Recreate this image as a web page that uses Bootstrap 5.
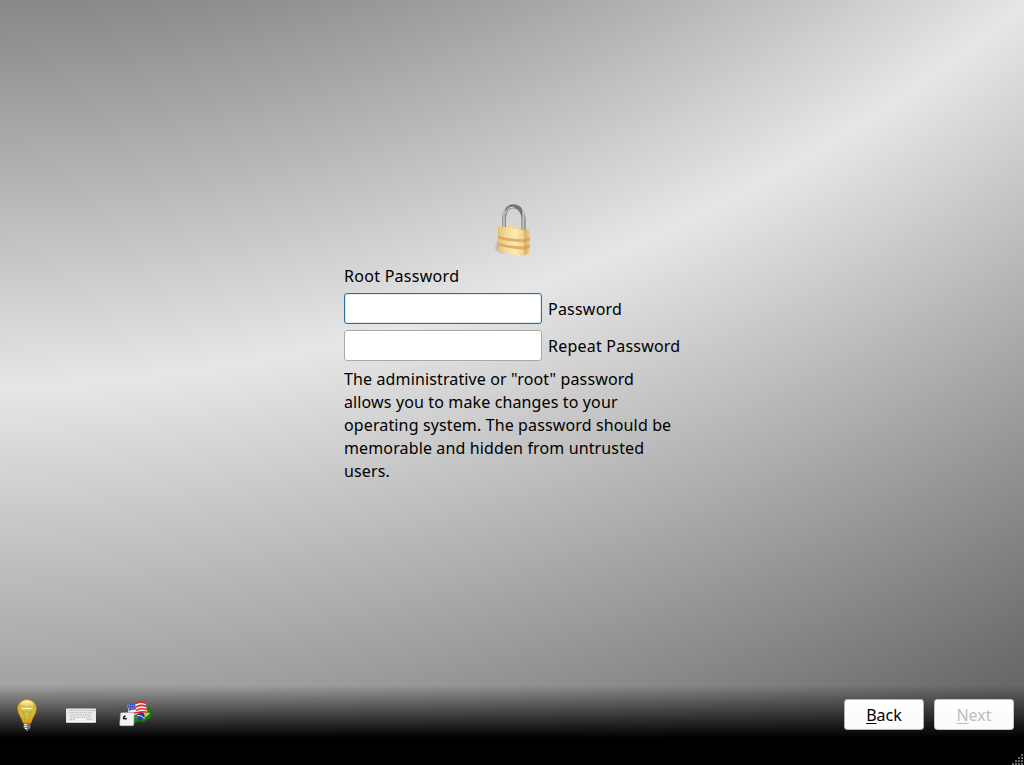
<!DOCTYPE html>
<html lang="en">
<head>
<meta charset="utf-8">
<meta name="viewport" content="width=device-width, initial-scale=1">
<title>Root Password</title>
<link href="https://cdn.jsdelivr.net/npm/bootstrap@5.3.0/dist/css/bootstrap.min.css" rel="stylesheet">
<style>
  body {
    font-family: "Noto Sans", sans-serif; font-size: 16px; line-height: 23px; color: #000;
    background: radial-gradient(circle at -51px -1308px, #868686 1305px, #e6e6e6 1697px, #666 2264px) no-repeat #646464;
  }
  .setup-form { width: 336px; padding-top: 200px; }
  .form-title { margin-top: 5px; letter-spacing: .28px; }
  .field-list { padding-top: 5px; letter-spacing: .22px; }
  .setup-form .form-control { width: 198px; height: 31px; border: 1px solid #a8a8a8; border-radius: 3px; padding: 2px 6px; background: #fff; box-shadow: none; }
  .setup-form .form-control.active-field { border-color: #2270a4; box-shadow: inset 0 0 0 1px #e0edf4; }
  .field-row { gap: 6px; height: 31px; margin-bottom: 6px; }
  .field-row label { padding-top: 2px; }
  .hint-text { padding-top: 1px; letter-spacing: .13px; }
  .bottom-bar { height: 80px; padding: 14px 10px 0 11px; background: linear-gradient(rgba(0,0,0,0), #000 53px); }
  .tool-icons { gap: 22px; height: 32px; }
  .nav-btn { width: 80px; height: 31px; padding: 2px 0 0; line-height: 23px; color: #000; background: linear-gradient(#fff, #fafafa); border: 1px solid #b4b4b4; border-radius: 3px; }
  .nav-btn:disabled { color: #bebebe; background: linear-gradient(#fff, #fafafa); border-color: #c4c4c4; opacity: 1; }
  .nav-btn u { text-decoration-thickness: 1px; text-underline-offset: 2px; text-decoration-skip-ink: none; }
  svg { display: block; }
</style>
</head>
<body>
<div class="vh-100 d-flex flex-column overflow-hidden position-relative">
  <main class="flex-grow-1">
    <div class="setup-form mx-auto">
      <svg class="mx-auto" width="60" height="60" viewBox="0 0 60 60">
        <defs>
          <linearGradient id="brass"><stop offset="0" stop-color="#e3c07a"/><stop offset=".2" stop-color="#f0d692"/><stop offset=".55" stop-color="#fcecb4"/><stop offset=".8" stop-color="#f0d28a"/><stop offset=".85" stop-color="#d8ae62"/><stop offset="1" stop-color="#eed08a"/></linearGradient>
          <linearGradient id="steel" gradientUnits="userSpaceOnUse" x1="20" x2="43.500" y1="0" y2="0"><stop offset="0" stop-color="#808080"/><stop offset=".08" stop-color="#ccc"/><stop offset=".17" stop-color="#7b7b7b"/><stop offset=".5" stop-color="#858585"/><stop offset=".83" stop-color="#747474"/><stop offset=".91" stop-color="#cecece"/><stop offset="1" stop-color="#666"/></linearGradient>
          <filter id="haze" x="-50%" width="200%"><feGaussianBlur stdDeviation="1.3"/></filter>
        </defs>
        <path d="M17 38l-3.500 10q2 5 9 5z" fill="#777" opacity=".45" filter="url(#haze)"/>
        <path d="M16 26.500l6-1.500 25 4.500-5.500 2.500z" fill="#f3d78c"/>
        <path d="M22 27.500V18.500C22.300 10 26.500 6.300 31.500 6.300S41.500 11 41.500 19.500V31" fill="none" stroke="url(#steel)" stroke-width="4"/>
        <path d="M23 13.500C25 9 28 7 32 7" fill="none" stroke="#ddd" stroke-width="1"/>
        <path d="M28 5.500q5-1.200 9 3" fill="none" stroke="#555" stroke-width=".9"/>
        <path d="M15.900 27.500q0-1.500 1.300-1.200l24.500 4.200 5-1.500q1.100-.3 1.100.8V51.500q0 1.200-1 1.600l-4.300 2.500q-1 .5-2 .3Q27 54.500 17 51q-1.100-.5-1.100-1.700z" fill="url(#brass)"/>
        <path d="M16 35.700Q28 39.400 42 39.200l5.700-1.700v3L42 42.300Q28 42 16 38.500zM16 42.500Q28 46.500 42 46.500l5.700-1.800v2.800L42 49.400Q28 49 16 45.200z" fill="#d39b58" opacity=".72"/>
      </svg>
      <div class="form-title">Root Password</div>
      <form class="field-list">
        <div class="field-row d-flex align-items-center"><input type="password" id="pw" class="form-control flex-shrink-0 active-field"><label for="pw" class="text-nowrap">Password</label></div>
        <div class="field-row d-flex align-items-center"><input type="password" id="pw2" class="form-control flex-shrink-0"><label for="pw2" class="text-nowrap">Repeat Password</label></div>
      </form>
      <p class="hint-text mb-0">The administrative or "root" password allows you to make changes to your operating system. The password should be memorable and hidden from untrusted users.</p>
    </div>
  </main>
  <footer class="bottom-bar d-flex justify-content-between align-items-start">
    <div class="tool-icons d-flex align-items-center">
      <svg width="32" height="32" viewBox="0 0 32 32">
        <defs><radialGradient id="bulb" cx=".5" cy=".4" r=".6"><stop offset="0" stop-color="#dccb58"/><stop offset=".7" stop-color="#d0b738"/><stop offset="1" stop-color="#e8a312"/></radialGradient><linearGradient id="shine" x2="0" y2="1"><stop offset="0" stop-color="#fffbe0"/><stop offset="1" stop-color="#efdc7c" stop-opacity=".5"/></linearGradient></defs>
        <path d="M16 .800C10 .800 6.800 5 6.800 10C6.800 15 11 18.500 12 23.500H20C21 18.500 25.200 15 25.200 10C25.200 5 22 .800 16 .800z" fill="url(#bulb)" stroke="#e59c0c" stroke-width=".8"/>
        <path d="M16 1.500c-3.600 0-6.200 2-6.800 4.800q6.800 1.500 13.600 0C22.200 3.500 19.600 1.500 16 1.500z" fill="url(#shine)"/>
        <path d="M10.500 9.500h11" stroke="#fff6bf" stroke-width="1.200"/>
        <path d="M14.500 23l-1.500-7-1.500-4 2 2 2.500-2 2.500 2 2-2-1.500 4-1.500 7" fill="none" stroke="#a78b22" stroke-width=".7" opacity=".7"/>
        <path d="M12.500 24h7v5l-2 1.500-1 1.500h-1l-1-1.500-2-1.500z" fill="#777"/>
        <path d="M13 25.500h3M13 27.500h3M14 29.500h2" stroke="#eee"/>
      </svg>
      <svg width="32" height="32" viewBox="0 0 32 32">
        <rect x="1" y="9.500" width="30" height="14" rx=".8" fill="#e9e9e9"/>
        <path d="M1.300 22.800h29.400" stroke="#fff" stroke-width="1.400"/>
        <path d="M4 11.500h24M4.500 13.700h23M5 15.900h21M6 18.100h20" stroke="#b9b9b9" stroke-width="1" stroke-dasharray="1.300 .8"/>
        <path d="M5 20.300h5M22 20.300h5" stroke="#b9b9b9" stroke-dasharray="2 .8"/><path d="M10 20.300h11" stroke="#fff"/>
        <circle cx="29.300" cy="11.500" r=".6" fill="#b54458"/>
      </svg>
      <svg width="32" height="32" viewBox="0 0 32 32">
        <path d="M15 11l10-1.500q4-1.500 6.500-.5L32.500 19q-3.500.5-6 2.500t-6 .8L14 24z" fill="#10800f"/>
        <path d="M16 19l8-7.500 7 3-7.500 6z" fill="#ddd223"/>
        <circle cx="21.500" cy="17" r="4.200" fill="#22449d"/><path d="M18 16.500q4.500-.5 7.500 3" fill="none" stroke="#dce9ef"/>
        <path d="M8.500 6Q11 4.500 15 5C19 4.500 21 2 26.500 4.500L28.500 13.500q-5-3-9 .8t-10-.3z" fill="#f7eeee"/>
        <path d="M16 4.800C20 3 22 2.300 26.500 4.300M16.500 8.200C20.500 6.300 22.500 5.500 27.300 7.600M17 11.400C20.500 10 22.500 8.500 28 10.700M10 13.700C17 16.500 20 10.500 28.500 13.500" fill="none" stroke="#e32a2a" stroke-width="1.600"/>
        <path d="M8.500 6Q12 4.500 16 4.600l1 6q-3.700 0-7 1.200z" fill="#3a50b4"/>
        <path d="M10 7l6-1M10.500 9.500l6-1" stroke="#d9def4" stroke-width=".8" stroke-dasharray="1 1"/>
        <path d="M1.600 14.900q0-1.200 1.200-1.200h11q1.300 0 1.300 1.200l-.3 10.300q0 1.500-1.500 1.500H2q-1.400 0-1.300-1.500z" fill="#f3f3f3" stroke="#bbb" stroke-width=".5"/>
        <path d="M6.500 17q-2.300.8-1.900 2.500l3.200.3" fill="none" stroke="#111" stroke-width="1.400"/>
      </svg>
    </div>
    <div class="d-flex" style="gap:10px">
      <button class="btn nav-btn" type="button"><u>B</u>ack</button>
      <button class="btn nav-btn" type="button" disabled><u>N</u>ext</button>
    </div>
  </footer>
  <svg class="position-absolute bottom-0 end-0" width="12" height="12" viewBox="0 0 12 12" fill="#686868"><path d="M9 1h2v2H9zM9 4h2v2H9zM6 4h2v2H6zM9 7h2v2H9zM6 7h2v2H6zM3 7h2v2H3zM9 10h2v2H9zM6 10h2v2H6zM3 10h2v2H3zM0 10h2v2H0z"/></svg>
</div>
<script src="https://cdn.jsdelivr.net/npm/bootstrap@5.3.0/dist/js/bootstrap.bundle.min.js"></script>
</body>
</html>
